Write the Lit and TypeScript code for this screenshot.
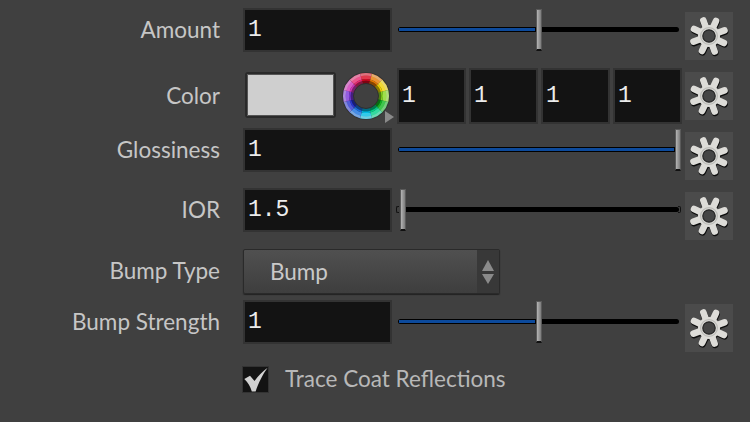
import { LitElement, html, css, svg } from "lit";
import { customElement } from "lit/decorators.js";

const HUES = ["#d80820","#e87800","#eed000","#86d820","#10b820","#00d088","#00bce4","#1870e0","#2834d0","#7834d8","#d034b8","#e82870"];
const rad = (d: number) => (d * Math.PI) / 180;
const pt = (r: number, a: number) => `${(24 + r * Math.sin(rad(a))).toFixed(2)} ${(24 - r * Math.cos(rad(a))).toFixed(2)}`;
const seg = (r1: number, r2: number, a: number, b: number) =>
  `M${pt(r1, a)}A${r1} ${r1} 0 0 1 ${pt(r1, b)}L${pt(r2, b)}A${r2} ${r2} 0 0 0 ${pt(r2, a)}Z`;

function wheel() {
  return html`<svg class="wheel" viewBox="0 0 48 48" width="48" height="48">
    <circle cx="24" cy="24" r="24" fill="#343434"></circle>
    ${HUES.map((c, i) => {
      const a = i * 30 - 15, b = a + 30;
      return svg`<path d=${seg(23, 17, a, b)} fill=${c}></path>
        <path d=${seg(23, 20.5, a, b)} fill="#ddd" opacity=".5"></path>
        <path d=${seg(20.5, 17, a, b)} fill="#fff" opacity=".2"></path>
        <path d=${seg(17, 12.5, a, b)} fill=${c}></path>
        <path d=${seg(15.5, 12.5, a, b)} fill="#000" opacity=".42"></path>`;
    })}
    <circle cx="24" cy="24" r="12.5" fill="#404040" stroke="#2a2a2a" stroke-width=".8"></circle>
  </svg>`;
}

function gear() {
  const angs = [0, 45, 90, 135, 180, 225, 270, 315].map((a) => a + 25);
  const petals = (color: string, w: number) =>
    angs.map((a) => {
      const x = 24 + 16.5 * Math.sin(rad(a)), y = 24 - 16.5 * Math.cos(rad(a));
      return svg`<line x1="24" y1="24" x2=${x} y2=${y} stroke=${color} stroke-width=${w} stroke-linecap="round"></line>`;
    });
  return html`<div class="gear"><svg viewBox="0 0 48 48" width="48" height="48">
    <g class="gear-shadow">
      ${petals("#0e0e0e", 7)}
      <circle cx="24" cy="24" r="11" fill="#0e0e0e"></circle>
    </g>
    ${petals("#dddcd8", 6.6)}
    <circle cx="24" cy="24" r="11" fill="#dddcd8"></circle>
    <circle cx="24" cy="24" r="8.4" fill="none" stroke="#bcbcb8" stroke-width="1.2"></circle>
    <circle cx="24" cy="24" r="6.2" fill="#454545" stroke="#262626" stroke-width="1.2"></circle>
  </svg></div>`;
}

@customElement("app-root")
export class AppRoot extends LitElement {
  static styles = css`
    :host { display: block; width: 750px; height: 422px; background: #404040; overflow: hidden;
      font-family: "Lato", "Noto Sans", sans-serif; color: #c6c6c6; }
    .panel { display: flex; flex-direction: column; padding-top: 8px; }
    .row { display: flex; align-items: flex-start; }
    .label { flex: 0 0 220px; height: 44px; line-height: 44px; text-align: right; font-size: 22.5px; margin-right: 23px; white-space: nowrap; }
    .num { box-sizing: border-box; background: #131313; border: 2px solid #333; color: #ececec;
      font-family: "Liberation Mono", monospace; font-size: 23px; display: flex; align-items: center; padding-left: 3px; }
    .main { width: 149px; height: 44px; }
    .slider { position: relative; width: 281px; height: 44px; margin-left: 6px; flex: none; }
    .track { position: absolute; left: 0; right: 0; top: 19px; height: 5px; background: #000; border-radius: 3px; }
    .track.from { left: 4px; }
    .fill { position: absolute; left: 1px; top: 1px; height: 3px; background: #0c4a9c; }
    .handle { position: absolute; top: 1px; width: 6px; height: 42px; box-sizing: border-box;
      background: linear-gradient(90deg, #b4b4b4, #7c7c7c); border: 1px solid #5a5a5a; border-bottom: 2px solid #111; }
    .gear { flex: none; width: 48px; height: 48px; margin: 4px 0 0 6px; background: #4b4b4b; }
    .gear svg, .wheel { display: block; }
    .gear-shadow { filter: blur(0.7px); transform: translate(0.4px, 1.2px); }
    .r1 { height: 60px; }
    .r2 { height: 60px; }
    .r2 .label { margin-top: 6px; margin-right: 25px; }
    .swatch { box-sizing: border-box; width: 91px; height: 46px; margin-top: 4px; background: #cfcfcf; border: 2px solid #2a2a2a;
      border-radius: 3px; box-shadow: inset 0 0 0 1px #555; flex: none; }
    .wheelbox { position: relative; margin: 4px 7px 0 6px; width: 48px; height: 48px; flex: none; }
    .tri { position: absolute; right: -4px; bottom: -3px; width: 0; height: 0; border-left: 9px solid #8a8a8a; border-top: 6px solid transparent; border-bottom: 6px solid transparent; }
    .cells { display: flex; gap: 3px; }
    .cell { width: 69px; height: 56px; padding-left: 3px; }
    .r2 .gear { margin-left: 3px; }
    .r3 { height: 60px; }
    .r4 { height: 61px; }
    .r5 { height: 51px; }
    .r6 { height: 66px; }
    .drop { box-sizing: border-box; width: 257px; height: 45px; display: flex; border: 1px solid #2a2a2a; border-radius: 2px;
      background: linear-gradient(#505050, #3e3e3e); box-shadow: 0 1px 1px #222; font-size: 22.5px; color: #c9c9c9; }
    .drop-text { flex: 1; padding-left: 26px; line-height: 43px; }
    .drop-arrows { flex: 0 0 22px; background: #383838; display: flex; flex-direction: column; align-items: center; justify-content: center; gap: 3px; }
    .up, .down { width: 0; height: 0; border-left: 6px solid transparent; border-right: 6px solid transparent; }
    .up { border-bottom: 11px solid #8a8a8a; }
    .down { border-top: 10px solid #8a8a8a; }
    .check { display: flex; align-items: center; margin-left: 242px; height: 27px; font-size: 22.5px; color: #b8b8b8; }
    .check span { padding-bottom: 2px; }
    .box { box-sizing: border-box; width: 27px; height: 27px; background: #131313; border: 1px solid #333; margin-right: 16px; flex: none; }
    .box svg { display: block; }
    .stop { position: absolute; left: -2px; top: 18px; width: 3px; height: 7px; border: 1px solid #111; border-right: 0; border-radius: 2px 0 0 2px; box-sizing: border-box; }
    .stop-r { position: absolute; right: -2px; top: 18px; width: 3px; height: 7px; border: 1px solid #111; border-left: 0; border-radius: 0 2px 2px 0; box-sizing: border-box; }
  `;

  private slider(fill: number, handle: number, ends = false) {
    return html`<div class="slider">
      <div class="track ${ends ? "from" : ""}">${fill > 0 ? html`<div class="fill" style="width:${fill}px"></div>` : ""}</div>
      ${ends ? html`<div class="stop"></div><div class="stop-r"></div>` : ""}
      <div class="handle" style="left:${handle}px"></div>
    </div>`;
  }

  render() {
    return html`<div class="panel">
      <div class="row r1">
        <div class="label">Amount</div>
        <div class="num main">1</div>
        ${this.slider(136, 138)}
        ${gear()}
      </div>
      <div class="row r2">
        <div class="label">Color</div>
        <div class="swatch"></div>
        <div class="wheelbox">${wheel()}<div class="tri"></div></div>
        <div class="cells">
          <div class="num cell">1</div><div class="num cell">1</div><div class="num cell">1</div><div class="num cell">1</div>
        </div>
        ${gear()}
      </div>
      <div class="row r3">
        <div class="label">Glossiness</div>
        <div class="num main">1</div>
        ${this.slider(275, 277)}
        ${gear()}
      </div>
      <div class="row r4">
        <div class="label">IOR</div>
        <div class="num main">1.5</div>
        ${this.slider(0, 2, true)}
        ${gear()}
      </div>
      <div class="row r5">
        <div class="label">Bump Type</div>
        <div class="drop"><div class="drop-text">Bump</div><div class="drop-arrows"><div class="up"></div><div class="down"></div></div></div>
      </div>
      <div class="row r6">
        <div class="label">Bump Strength</div>
        <div class="num main">1</div>
        ${this.slider(136, 138)}
        ${gear()}
      </div>
      <div class="check">
        <div class="box"><svg viewBox="0 0 25 25" width="25" height="25"><path d="M1.3 12 L7 8.7 L11.5 14 C15 9 20 4 24.6 .8 C20 7 15.5 16 12.6 24.4 L8.8 24.4 C7.5 20 5 15.5 1.3 12 Z" fill="#d2d2d2"></path></svg></div>
        <span>Trace Coat Reflections</span>
      </div>
    </div>`;
  }
}
